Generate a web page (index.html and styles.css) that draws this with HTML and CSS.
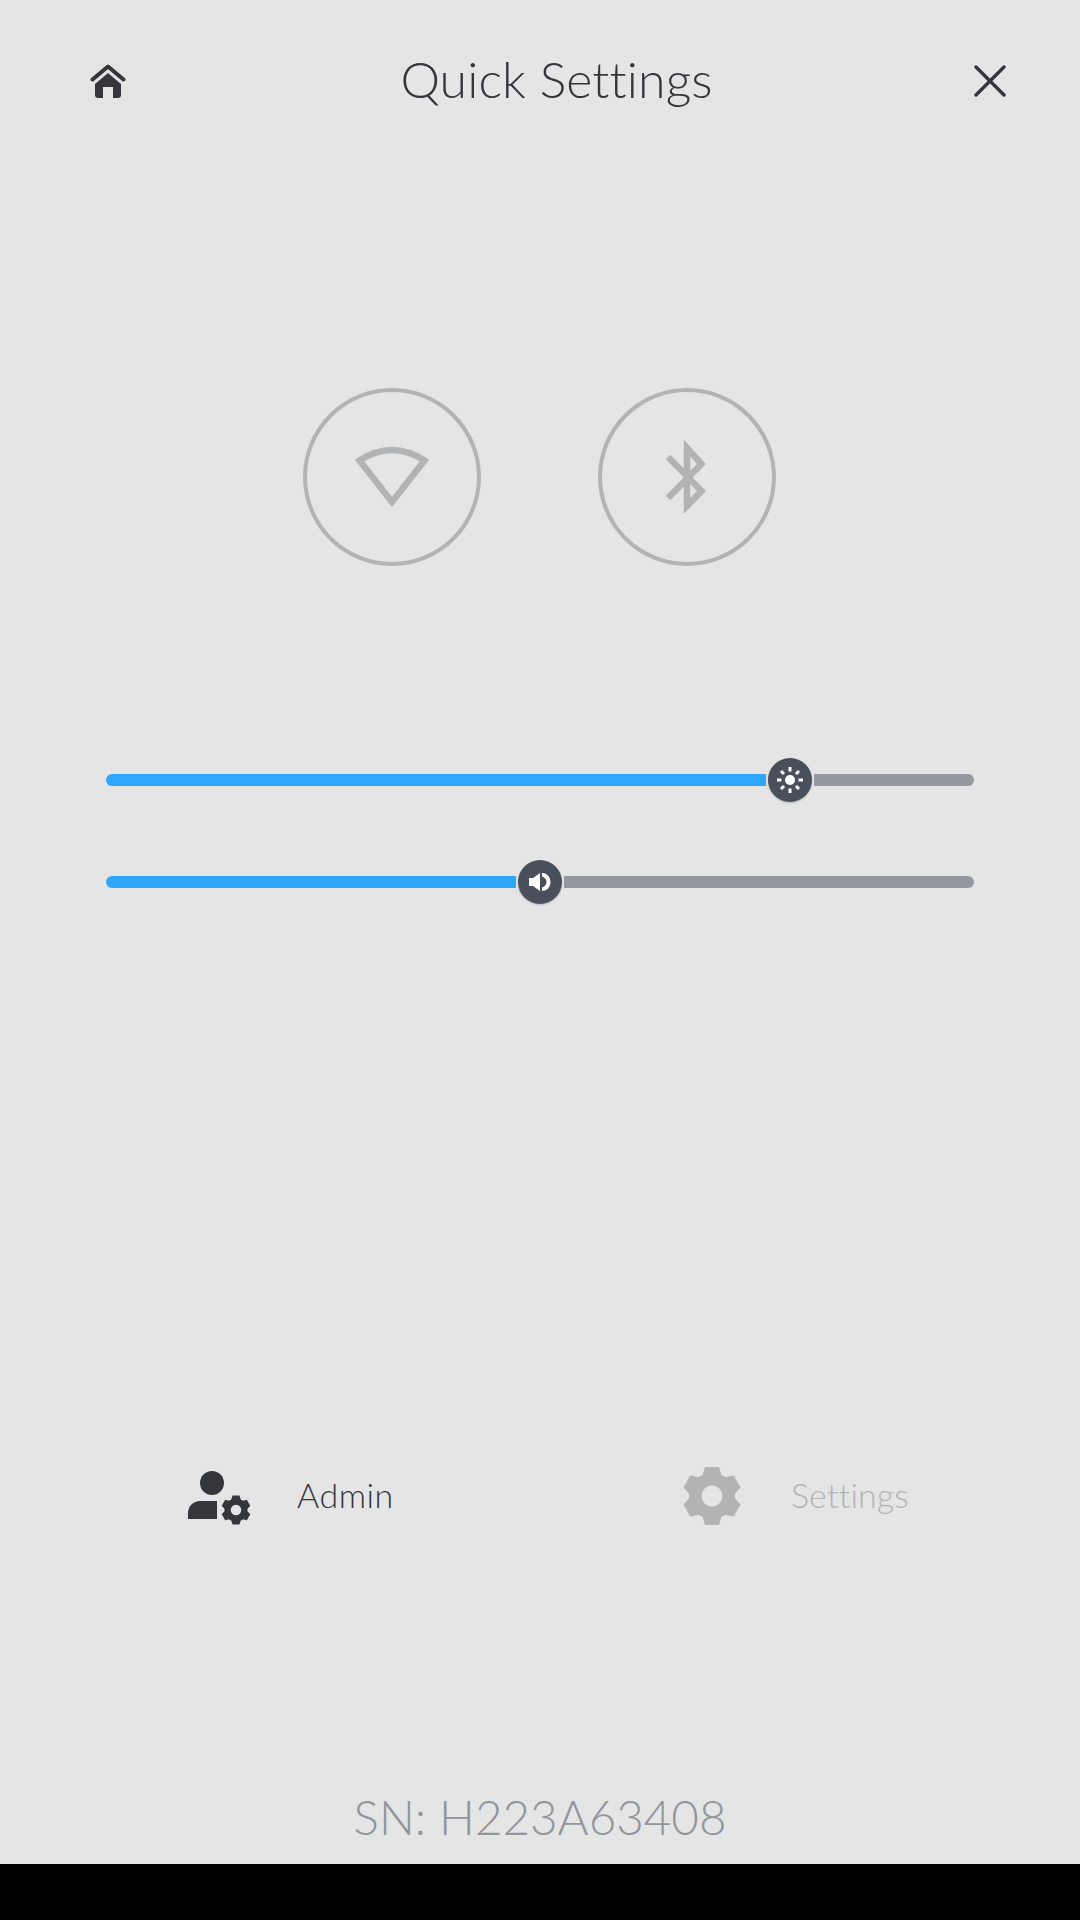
FILE: index.html
```html
<!DOCTYPE html>
<html lang="en">
<head>
  <meta charset="UTF-8" />
  <title>Quick Settings</title>
  <link rel="stylesheet" href="styles.css">
</head>
<body>
  <svg class="defs" width="0" height="0">
    <symbol id="gear" viewBox="0 0 60 60">
      <circle cx="30" cy="30" r="16.75" fill="none" stroke="currentColor" stroke-width="12.5"/>
      <polygon points="23,1 37,1 40,11 20,11" fill="currentColor"/>
      <polygon points="23,1 37,1 40,11 20,11" fill="currentColor" transform="rotate(60 30 30)"/>
      <polygon points="23,1 37,1 40,11 20,11" fill="currentColor" transform="rotate(120 30 30)"/>
      <polygon points="23,1 37,1 40,11 20,11" fill="currentColor" transform="rotate(180 30 30)"/>
      <polygon points="23,1 37,1 40,11 20,11" fill="currentColor" transform="rotate(240 30 30)"/>
      <polygon points="23,1 37,1 40,11 20,11" fill="currentColor" transform="rotate(300 30 30)"/>
    </symbol>
  </svg>

  <main class="screen">
    <header class="top-bar">
      <svg class="home-icon" viewBox="0 0 36 34" width="36" height="34">
        <path d="M2.5 15.5 18 2.5l15.5 13" fill="none" stroke="currentColor" stroke-width="4" stroke-linecap="round" stroke-linejoin="round"/>
        <path d="M18 9 31 20v11a3 3 0 0 1-3 3h-5V23h-10v11H8a3 3 0 0 1-3-3V20z" fill="currentColor"/>
      </svg>
      <h1 class="title">Quick Settings</h1>
      <svg class="close-icon" viewBox="0 0 32 32" width="32" height="32">
        <path d="M2 2 30 30M30 2 2 30" fill="none" stroke="currentColor" stroke-width="3.4" stroke-linecap="round"/>
      </svg>
    </header>

    <section class="toggles">
      <div class="toggle">
        <svg class="toggle-icon" viewBox="0 0 76 60" width="76" height="60">
          <path d="M38 55 5.500 13.500Q38-7.500 70.500 13.500Z" fill="none" stroke="currentColor" stroke-width="6.500"/>
        </svg>
      </div>
      <div class="toggle">
        <svg class="toggle-icon" viewBox="0 0 42 68" width="42" height="68">
          <path d="M2 14 35.500 48 21 63V5L35.500 21 2 55" fill="none" stroke="currentColor" stroke-width="6.500"/>
        </svg>
      </div>
    </section>

    <section class="sliders">
      <div class="slider">
        <div class="fill" style="width: 660px"></div>
        <div class="thumb">
          <svg viewBox="0 0 44 44" width="44" height="44">
            <circle cx="22" cy="22" r="5" fill="#fff"/>
            <path d="M22 9v4.500M22 30.500V35M9 22h4.500M30.500 22H35M13 13l3 3M28 28l3 3M31 13l-3 3M16 28l-3 3" stroke="#fff" stroke-width="3"/>
          </svg>
        </div>
        <div class="rest"></div>
      </div>
      <div class="slider">
        <div class="fill" style="width: 410px"></div>
        <div class="thumb">
          <svg viewBox="0 0 44 44" width="44" height="44">
            <path d="M11 18h4l7-5v18l-7-5h-4z" fill="#fff"/>
            <path d="M24 13c5 0 8.500 4 8.500 9s-3.500 9-8.500 9v-3.500c2.500-.5 4.500-2.800 4.500-5.500s-2-5-4.500-5.500z" fill="#fff"/>
          </svg>
        </div>
        <div class="rest"></div>
      </div>
    </section>

    <section class="actions">
      <div class="action admin">
        <svg viewBox="0 0 64 56" width="64" height="56">
          <circle cx="24" cy="13" r="12" fill="currentColor"/>
          <path d="M0 49v-6a12 12 0 0 1 12-12h17v18z" fill="currentColor"/>
          <use href="#gear" x="33" y="25" width="30" height="30"/>
        </svg>
        <span class="label">Admin</span>
      </div>
      <div class="action settings">
        <svg viewBox="0 0 60 60" width="60" height="60"><use href="#gear"/></svg>
        <span class="label">Settings</span>
      </div>
    </section>

    <footer class="serial">SN: H223A63408</footer>
  </main>
</body>
</html>
```

FILE: styles.css
```css
body {
  margin: 0;
  background-color: #000;
  height: 1920px;
  font-family: 'Lato', sans-serif;
  font-weight: 300;
  font-variant-ligatures: none;
  color: #34363c;
}

.defs {
  position: absolute;
}

.screen {
  height: 1864px;
  background-color: #e5e5e5;
  display: flex;
  flex-direction: column;
}

.top-bar {
  display: flex;
  justify-content: space-between;
  align-items: center;
  height: 34px;
  padding: 64px 74px 0 90px;
}

.title {
  margin: 0 0 4px 13px;
  font-size: 50px;
  letter-spacing: 0.1px;
  font-weight: 300;
  line-height: 34px;
}

.toggles {
  display: flex;
  justify-content: center;
  gap: 117px;
  margin-top: 290px;
  padding-right: 1px;
}

.toggle {
  width: 170px;
  height: 170px;
  border: 4px solid #b2b3b5;
  border-radius: 50%;
  display: flex;
  align-items: center;
  justify-content: center;
  color: #b2b3b5;
}

.toggle-icon {
  overflow: visible;
}

.sliders {
  display: flex;
  flex-direction: column;
  gap: 58px;
  margin: 192px 106px 0;
}

.slider {
  display: flex;
  align-items: center;
  gap: 2px;
  height: 44px;
}

.fill {
  height: 12px;
  background-color: #2ea6f9;
  border-radius: 6px 0 0 6px;
}

.rest {
  flex: 1;
  height: 12px;
  background-color: #9598a0;
  border-radius: 0 6px 6px 0;
}

.thumb {
  width: 44px;
  height: 44px;
  border-radius: 50%;
  background-color: #4a4f5c;
  box-shadow: 0 1px 2px rgba(0,0,0,0.2);
}

.actions {
  display: flex;
  margin: 562px 0 0 188px;
}

.action {
  display: flex;
  align-items: flex-end;
}

.admin {
  width: 494px;
  gap: 45px;
}

.settings {
  gap: 49px;
  color: #b2b3b5;
}

.label {
  align-self: center;
  margin-bottom: 3px;
  font-size: 34px;
  letter-spacing: 0.5px;
}

.settings .label {
  letter-spacing: 0.1px;
}

.serial {
  margin-top: auto;
  padding-bottom: 19px;
  text-align: center;
  font-size: 47.5px;
  line-height: 56px;
  color: #92959c;
}
```
